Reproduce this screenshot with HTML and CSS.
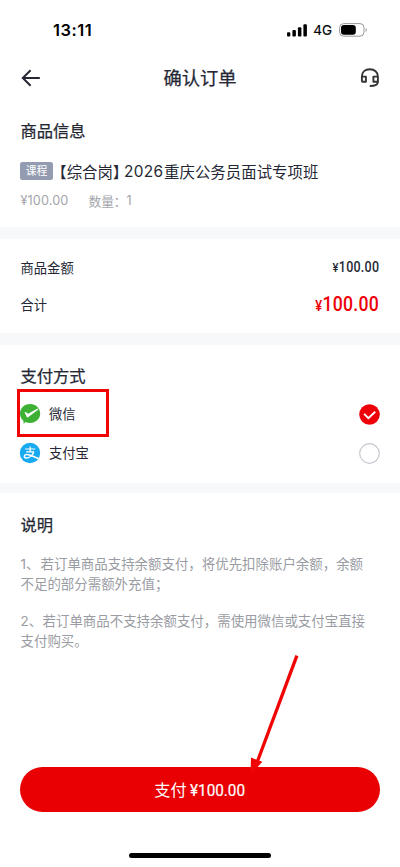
FILE: index.html
```html
<!DOCTYPE html>
<html lang="zh-CN">
<head>
<meta charset="utf-8">
<title>确认订单</title>
<link rel="stylesheet" href="styles.css">
</head>
<body>
<div class="app">
  <div class="status">
    <span class="time">13:11</span>
    <div class="status-right">
      <svg class="signal" width="20" height="13" viewBox="0 0 20 13"><rect x="0" y="8.3" width="3.3" height="4.2" rx="1"/><rect x="5.4" y="6" width="3.5" height="6.5" rx="1"/><rect x="10.9" y="3.3" width="3.5" height="9.2" rx="1"/><rect x="16.4" y="0.2" width="3.5" height="12.3" rx="1"/></svg>
      <span class="net">4G</span>
      <svg class="battery" width="28" height="14" viewBox="0 0 28 14"><rect x=".6" y=".6" width="24.4" height="12.6" rx="4" fill="none" stroke="#999" stroke-width="1"/><rect x="2" y="2" width="14.8" height="9.8" rx="3"/><path d="M26.6 5v4c1.6-.8 1.6-3.2 0-4z" fill="#999"/></svg>
    </div>
  </div>
  <header class="nav">
    <svg class="back" width="20" height="18" viewBox="0 0 20 18"><path d="M18.800 9H2M9.600 1.200 1.800 9l7.800 7.800"/></svg>
    <h1>确认订单</h1>
    <svg class="service" width="20" height="20" viewBox="0 0 20 20"><path d="M1.900 13V8.400C1.900 4 5.100 1.200 9.800 1.200s8.100 2.900 8.100 7.200V14c0 2.300-2.600 4-8.100 4M1.900 8.600h4v5.200h-3a1 1 0 0 1-1-1zM13.400 8.600h4.500v5.200h-4.500z"/></svg>
  </header>

  <section class="goods">
    <h2>商品信息</h2>
    <div class="goods-name"><span class="tag">课程</span><span class="bracket">【综合岗】</span><span class="year">2026</span><span class="rest">重庆公务员面试专项班</span></div>
    <div class="goods-meta"><span class="unit">¥100.00</span><span>数量：</span><span>1</span></div>
  </section>

  <section class="amounts">
    <div class="row"><span>商品金额</span><span class="sum"><i>¥</i>100.00</span></div>
    <div class="row"><span>合计</span><span class="sum total"><i>¥</i>100.00</span></div>
  </section>

  <section class="methods">
    <h2>支付方式</h2>
    <div class="method">
      <svg width="20" height="20" viewBox="0 0 20 20"><path fill="#3db134" d="M10 0c5.800 0 10.200 4.200 10.200 9.600S15.800 19 10 19q-2.500 0-4.600-.9L3.700 20l-.3-3.200C1.200 15 0 12.500 0 9.600 0 4.200 4.300 0 10 0z"/><path fill="#fff" d="M4.600 8.200c.4-.4 1-.2 1.400.1l2.200 1.400 9.300-5.100.8 1L8.100 13.200c-.7.400-1.200.1-1.500-.5z"/></svg>
      <span>微信</span>
      <svg class="radio" width="21" height="21" viewBox="0 0 21 21"><circle cx="10.500" cy="10.500" r="10.300" fill="#ed0007"/><path d="m5.100 9.900 4.300 4.200 6.800-6.400" fill="none" stroke="#fff" stroke-width="1.900"/></svg>
      <div class="highlight"></div>
    </div>
    <div class="method">
      <svg width="20" height="20" viewBox="0 0 20 20"><defs><clipPath id="disc"><circle cx="10" cy="10" r="10.200"/></clipPath></defs><circle cx="10" cy="10" r="10.200" fill="#18aaf0"/><g fill="none" stroke="#fff" clip-path="url(#disc)"><path d="M5.200 6h10M10.200 3.600v5M6.200 8.800h7.800" stroke-width="1.200"/><path d="M13.800 8.700c-1.300 3.500-4.500 6.600-7.900 6.300-2.200-.3-2.200-3.200.4-3.500 3.200-.4 6.300 2.100 14.200 4.700" stroke-width="1.500"/></g></svg>
      <span>支付宝</span>
      <svg class="radio" width="21" height="21" viewBox="0 0 21 21"><circle cx="10.500" cy="10.500" r="9.800" fill="none" stroke="#c5c7ce" stroke-width="1.200"/></svg>
    </div>
  </section>

  <section class="notes">
    <h2>说明</h2>
    <p><span class="first">1、</span>若订单商品支持余额支付，将优先扣除账户余额，余额<br>不足的部分需额外充值；</p>
    <p><span class="second">2、</span>若订单商品不支持余额支付，需使用微信或支付宝直接<br>支付购买。</p>
  </section>

  <footer>
    <button class="pay"><span>支付</span><span class="pay-sum">¥100.00</span></button>
    <div class="home"></div>
    <svg class="arrow" width="60" height="130" viewBox="0 0 60 130"><path d="M52.900 5.600 13.600 111" fill="none" stroke="#f00404" stroke-width="3.300"/><path d="M7 107.500 18.300 111.800 6.500 125z" fill="#f00404"/></svg>
  </footer>
</div>
</body>
</html>
```
FILE: styles.css
```css
* { box-sizing: border-box; margin: 0; padding: 0; }
body { background: #fff; color: #252834; font-family: Inter, "Noto Sans CJK SC", sans-serif; font-size: 13.300px; }
.app { width: 400px; height: 867px; display: flex; flex-direction: column; overflow: hidden; }
svg { display: block; flex: none; overflow: visible; }
.status { height: 56px; padding: 20px 33px 0 53px; display: flex; justify-content: space-between; align-items: flex-start; color: #000; }
.time { font-size: 16.500px; font-weight: 600; line-height: 20px; letter-spacing: .5px; }
.status-right { display: flex; align-items: center; height: 20px; }
.net { font-size: 13.500px; font-weight: 400; margin: 0 7px 0 6px; -webkit-text-stroke: .15px; }
.nav { height: 43px; padding: 0 20.500px; display: flex; align-items: center; justify-content: space-between; margin-bottom: 1px; }
.nav h1 { font-size: 18.300px; font-weight: 400; line-height: 26px; -webkit-text-stroke: .25px; }
.back { fill: none; stroke: #252834; stroke-width: 2; }
.service { fill: none; stroke: #333; stroke-width: 1.900; stroke-linejoin: round; }
section { padding: 0 20.500px; flex: none; }
h2 { font-size: 16.300px; font-weight: 400; line-height: 24px; -webkit-text-stroke: .25px; }
.goods { height: 127px; padding-top: 19px; }
.goods-name { display: flex; align-items: center; height: 24px; margin-top: 16px; font-size: 15.400px; white-space: nowrap; }
.tag { width: 33px; height: 18px; line-height: 19px; border-radius: 2.500px; background: #929bb0; color: #fff; font-size: 10.800px; text-align: center; margin: -1px 6px 0 -.5px; }
.bracket { width: 65px; font-feature-settings: "halt"; }
.year { width: 40px; letter-spacing: .3px; }
.rest { letter-spacing: .05px; }
.goods-meta { display: flex; align-items: center; height: 20px; margin-top: 7px; color: #a4a5aa; font-size: 12.700px; }
.unit { width: 68px; letter-spacing: .1px; }
.amounts { height: 106px; border-top: 12px solid #f6f8fa; padding-top: 10px; }
.row { display: flex; align-items: center; justify-content: space-between; height: 37px; }
.sum { font: 500 14.500px/20px Roboto, sans-serif; letter-spacing: .3px; transform: scaleX(.86); transform-origin: right; }
.sum i { font-style: normal; font-size: 13px; }
.total { font-size: 20.500px; color: #ed0007; }
.total i { font-size: 15px; }
.methods { height: 150px; border-top: 12px solid #f6f8fa; padding-top: 19px; }
.method { height: 39px; display: flex; align-items: center; position: relative; }
.method > svg:first-child { margin: -1px 0 0 -.3px; }
.methods h2 + .method { margin-top: 7px; }
.method > span { margin: -3px 0 0 8.800px; }
.radio { margin-left: auto; margin-top: -1px; }
.highlight { position: absolute; left: -3.500px; top: -6px; width: 92px; height: 48px; border: 3px solid #f00404; }
.notes { border-top: 10px solid #f6f8fa; padding-top: 20px; height: 235px; }
.notes p { color: #9a9ca3; font-size: 13.450px; line-height: 20px; margin-top: 17px; white-space: nowrap; }
.first, .second { display: inline-block; width: 20px; }
.second { width: 22px; }
footer { position: relative; padding: 49px 20px 0; height: 149px; }
.pay { display: flex; align-items: center; justify-content: center; width: 360px; height: 45px; border: 0; border-radius: 22.500px; background: #e80003; color: #fff; font: 400 16.200px/24px Inter, "Noto Sans CJK SC", sans-serif; }
.pay-sum { font: 400 17px/24px Roboto, sans-serif; -webkit-text-stroke: .2px; width: 56px; margin-left: 3px; text-align: left; transform: scaleX(.9); transform-origin: left; }
.home { width: 142px; height: 5px; border-radius: 3px; background: #000; margin: 41px auto 0; }
.arrow { position: absolute; left: 244px; top: -68px; }
```
